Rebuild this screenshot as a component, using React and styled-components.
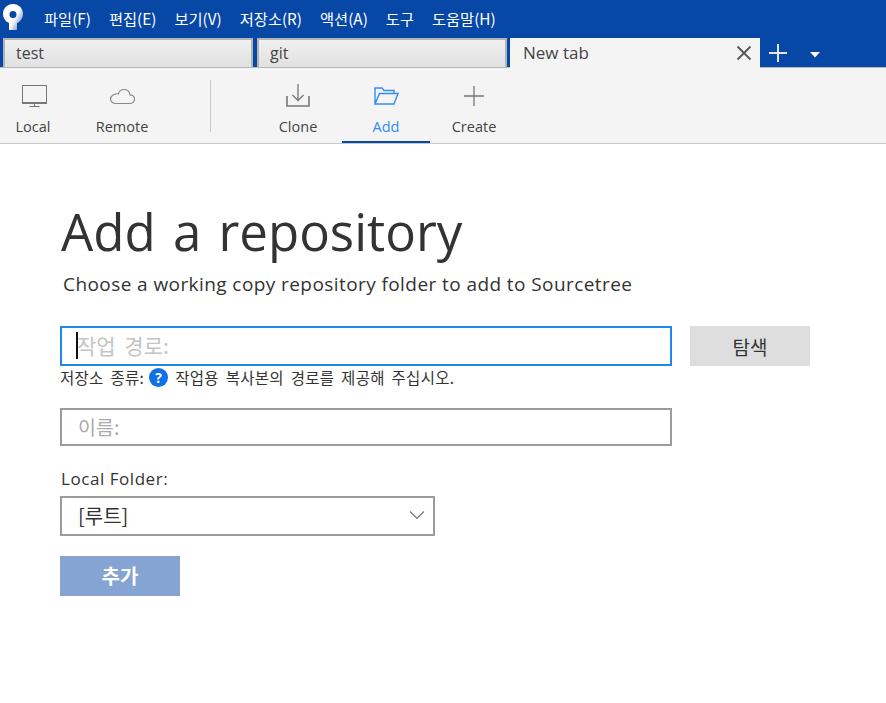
import React from 'react'
import styled, { createGlobalStyle } from 'styled-components'

const GlobalStyle = createGlobalStyle`
    html, body {
        margin: 0;
        padding: 0;
        background: #fff;
    }
    body {
        font-family: "Open Sans", "Noto Sans CJK KR", sans-serif;
        color: #333;
    }
`

const Page = styled.div`
    width: 886px;
    height: 703px;
    overflow: hidden;
    background: #fff;
`

const MenuBar = styled.div`
    height: 38px;
    background: #0747a6;
    display: flex;
    align-items: center;
`

const LogoWrap = styled.div`
    width: 44px;
    height: 38px;
    padding: 4px 0 0 3px;
    box-sizing: border-box;
    display: flex;
    align-items: flex-start;
`

const MenuItem = styled.div`
    font-family: "Noto Sans CJK KR", sans-serif;
    font-size: 15.3px;
    color: #fff;
    margin: 0 18px 3px 0;
`

const TabBar = styled.div`
    height: 29px;
    background: #0747a6;
    display: flex;
    align-items: flex-end;
    padding-left: 3px;
`

const Tab = styled.div`
    position: relative;
    z-index: ${p => (p.$active ? 1 : 0)};
    width: 250px;
    height: ${p => (p.$active ? 30 : 29)}px;
    margin-bottom: ${p => (p.$active ? -1 : 0)}px;
    box-sizing: border-box;
    margin-right: ${p => p.$gap}px;
    padding: 0 0 ${p => (p.$active ? 1 : 2)}px ${p => (p.$active ? 13 : 11)}px;
    display: flex;
    align-items: center;
    justify-content: space-between;
    font-size: ${p => (p.$active ? 17 : 16)}px;
    color: #444;
    background: ${p => (p.$active ? '#f4f4f4' : 'linear-gradient(#f0f0f0, #e1e1e1)')};
    border: ${p => (p.$active ? 'none' : '2px solid #b4b4b4')};
    border-bottom: none;
`

const TabClose = styled.svg`
    width: 16px;
    height: 16px;
    margin-right: 8px;
`

const TabAction = styled.svg`
    display: block;
    margin-left: ${p => p.$left}px;
    margin-bottom: ${p => p.$bottom}px;
`

const Toolbar = styled.div`
    height: 77px;
    box-sizing: border-box;
    background: #f4f4f4;
    border-top: 1px solid #b8b8b8;
    border-bottom: 1px solid #c8c8c8;
    display: flex;
    align-items: stretch;
`

const ToolItem = styled.div`
    width: ${p => p.$width}px;
    margin-left: ${p => p.$left || 0}px;
    box-sizing: border-box;
    display: flex;
    flex-direction: column;
    align-items: center;
    height: 75px;
    border-bottom: 2px solid ${p => (p.$active ? '#0747a6' : 'transparent')};
    color: ${p => (p.$active ? '#2f8df5' : '#444')};
`

const ToolIcon = styled.svg`
    width: 32px;
    height: 32px;
    margin-top: 12px;
    display: block;
`

const ToolLabel = styled.div`
    font-size: 14.5px;
    line-height: 20px;
    margin-top: 5px;
`

const ToolDivider = styled.div`
    width: 1px;
    height: 52px;
    margin: 12px 43px 0 44px;
    background: #c8c8c8;
`

const Content = styled.main`
    padding: 54px 0 0 60px;
`

const Title = styled.h1`
    margin: 0 0 0 1px;
    font-size: 51px;
    line-height: 66px;
    font-weight: 400;
    word-spacing: 4px;
    color: #333;
`

const Subtitle = styled.p`
    margin: 7px 0 0 3px;
    font-size: 19px;
    line-height: 26px;
    letter-spacing: 0.42px;
    color: #333;
`

const PathRow = styled.div`
    display: flex;
    gap: 18px;
    margin-top: 29px;
`

const Field = styled.div`
    position: relative;
    width: ${p => p.$width}px;
    height: ${p => p.$height}px;
    box-sizing: border-box;
    border: 2px solid ${p => (p.$focused ? '#1e88f0' : '#9b9b9b')};
    background: #fff;
    padding: 0 0 2px ${p => p.$pad}px;
    display: flex;
    align-items: center;
    justify-content: space-between;
    font-family: "Noto Sans CJK KR", sans-serif;
    font-size: ${p => p.$size}px;
    word-spacing: 4px;
`

const Placeholder = styled.span`
    color: ${p => (p.$dim ? '#aaaaaa' : '#c4c4c4')};
`

const Caret = styled.span`
    position: absolute;
    left: 14px;
    top: 4px;
    width: 2px;
    height: 27px;
    background: #111;
`

const BrowseButton = styled.div`
    width: 120px;
    height: 40px;
    background: #dedede;
    color: #333;
    display: flex;
    align-items: center;
    justify-content: center;
    font-family: "Noto Sans CJK KR", sans-serif;
    font-size: 19px;
`

const HelpRow = styled.div`
    display: flex;
    align-items: center;
    height: 24px;
    box-sizing: border-box;
    padding-bottom: 2px;
    font-family: "Noto Sans CJK KR", sans-serif;
    font-size: 15.5px;
    letter-spacing: 0.3px;
    word-spacing: 3px;
    color: #333;
`

const HelpBadge = styled.span`
    width: 19px;
    height: 19px;
    border-radius: 50%;
    background: #1070e8;
    color: #fff;
    font-family: "Open Sans", sans-serif;
    font-size: 14px;
    font-weight: 700;
    display: flex;
    align-items: center;
    justify-content: center;
    margin: 0 7px 0 5px;
`

const NameWrap = styled.div`
    margin-top: 18px;
`

const FieldLabel = styled.div`
    margin: 20px 0 4px 1px;
    font-size: 17px;
    line-height: 26px;
    letter-spacing: 0.55px;
    color: #333;
`

const SelectValue = styled.span`
    color: #333;
`

const Chevron = styled.svg`
    width: 16px;
    height: 10px;
    margin-right: 8px;
`

const AddButton = styled.div`
    width: 120px;
    height: 40px;
    box-sizing: border-box;
    padding-bottom: 2px;
    margin-top: 20px;
    background: #85a3d3;
    color: #fff;
    font-family: "Noto Sans CJK KR", sans-serif;
    font-size: 20px;
    font-weight: 700;
    display: flex;
    align-items: center;
    justify-content: center;
`

const menus = ['파일(F)', '편집(E)', '보기(V)', '저장소(R)', '액션(A)', '도구', '도움말(H)']

const App = () => {
    return (
        <Page>
            <GlobalStyle />
            <MenuBar>
                <LogoWrap>
                    <svg width="20" height="26" viewBox="0 0 20 26">
                        <defs>
                            <linearGradient id="logoFade" x1="0.35" y1="0.25" x2="1" y2="0.7">
                                <stop offset="0.45" stopColor="#fff" />
                                <stop offset="1" stopColor="#6f94cf" />
                            </linearGradient>
                        </defs>
                        <path fillRule="evenodd" fill="url(#logoFade)" d="M10 0C4.4 0 0 4.3 0 9.8C0 14 2.4 17.4 6 19V26H14V19.2C17.6 17.6 20 14 20 9.8C20 4.3 15.6 0 10 0ZM10 7A3.5 3.5 0 1 1 10 14A3.5 3.5 0 0 1 10 7Z" />
                    </svg>
                </LogoWrap>
                {menus.map(m => <MenuItem key={m}>{m}</MenuItem>)}
            </MenuBar>
            <TabBar>
                <Tab $gap={4}>test</Tab>
                <Tab $gap={3}>git</Tab>
                <Tab $active $gap={0}>
                    New tab
                    <TabClose viewBox="0 0 16 16">
                        <path d="M1.5 1.5 14.5 14.5M14.5 1.5 1.5 14.5" stroke="#555" strokeWidth="1.8" fill="none" />
                    </TabClose>
                </Tab>
                <TabAction $left={8} $bottom={4} width="20" height="20" viewBox="0 0 20 20">
                    <path d="M10 1V19M1 10H19" stroke="#e0e6f2" strokeWidth="2" fill="none" />
                </TabAction>
                <TabAction $left={22} $bottom={9} width="10" height="6" viewBox="0 0 10 6">
                    <path d="M0 0H10L5 5.5Z" fill="#fff" />
                </TabAction>
            </TabBar>
            <Toolbar>
                <ToolItem $width={66}>
                    <ToolIcon viewBox="0 0 32 32" fill="none" stroke="#777">
                        <rect x="5.5" y="5.5" width="24" height="18" strokeWidth="1" />
                        <path d="M5 23H30" strokeWidth="2" />
                        <path d="M12.5 26.5H22.5M17.5 24V26" strokeWidth="1" />
                    </ToolIcon>
                    <ToolLabel>Local</ToolLabel>
                </ToolItem>
                <ToolItem $width={88} $left={12}>
                    <ToolIcon viewBox="0 0 32 32" fill="none" stroke="#888">
                        <path strokeWidth="1.2" d="M10 23.5H23.5C26.5 23.5 28.5 21.5 28.5 19C28.5 16.5 26.5 14.8 24 14.8C23.5 11.5 21 9.5 18 9.5C15 9.5 13 11.5 12.3 13.8C9 13.5 4.5 15.5 4.5 19C4.5 21.5 7 23.5 10 23.5Z" />
                    </ToolIcon>
                    <ToolLabel>Remote</ToolLabel>
                </ToolItem>
                <ToolDivider />
                <ToolItem $width={88}>
                    <ToolIcon viewBox="0 0 32 32" fill="none" stroke="#777">
                        <path strokeWidth="1.3" d="M16 4V20M10.5 15 16 20.5 21.5 15" />
                        <path strokeWidth="1.6" d="M5 16V26H27V16" />
                    </ToolIcon>
                    <ToolLabel>Clone</ToolLabel>
                </ToolItem>
                <ToolItem $width={88} $active>
                    <ToolIcon viewBox="0 0 32 32" fill="none" stroke="#2f8df5">
                        <path strokeWidth="1.4" d="M5 24V8H12L14 10.5H24V13.5M5 24H24L28 13.5H9.5L5 24Z" />
                    </ToolIcon>
                    <ToolLabel>Add</ToolLabel>
                </ToolItem>
                <ToolItem $width={88}>
                    <ToolIcon viewBox="0 0 32 32" fill="none" stroke="#777">
                        <path strokeWidth="1.3" d="M16 6V26M6 16H26" />
                    </ToolIcon>
                    <ToolLabel>Create</ToolLabel>
                </ToolItem>
            </Toolbar>
            <Content>
                <Title>Add a repository</Title>
                <Subtitle>Choose a working copy repository folder to add to Sourcetree</Subtitle>
                <PathRow>
                    <Field $width={612} $height={40} $pad={15} $size={21} $focused>
                        <Caret />
                        <Placeholder>작업 경로:</Placeholder>
                    </Field>
                    <BrowseButton>탐색</BrowseButton>
                </PathRow>
                <HelpRow>
                    저장소 종류:
                    <HelpBadge>?</HelpBadge>
                    작업용 복사본의 경로를 제공해 주십시오.
                </HelpRow>
                <NameWrap>
                    <Field $width={612} $height={38} $pad={16} $size={19.5}>
                        <Placeholder $dim>이름:</Placeholder>
                    </Field>
                </NameWrap>
                <FieldLabel>Local Folder:</FieldLabel>
                <Field $width={375} $height={40} $pad={16} $size={20}>
                    <SelectValue>[루트]</SelectValue>
                    <Chevron viewBox="0 0 16 10">
                        <path d="M1 1.5 8 8.5 15 1.5" stroke="#777" strokeWidth="1.2" fill="none" />
                    </Chevron>
                </Field>
                <AddButton>추가</AddButton>
            </Content>
        </Page>
    )
}

export default App
